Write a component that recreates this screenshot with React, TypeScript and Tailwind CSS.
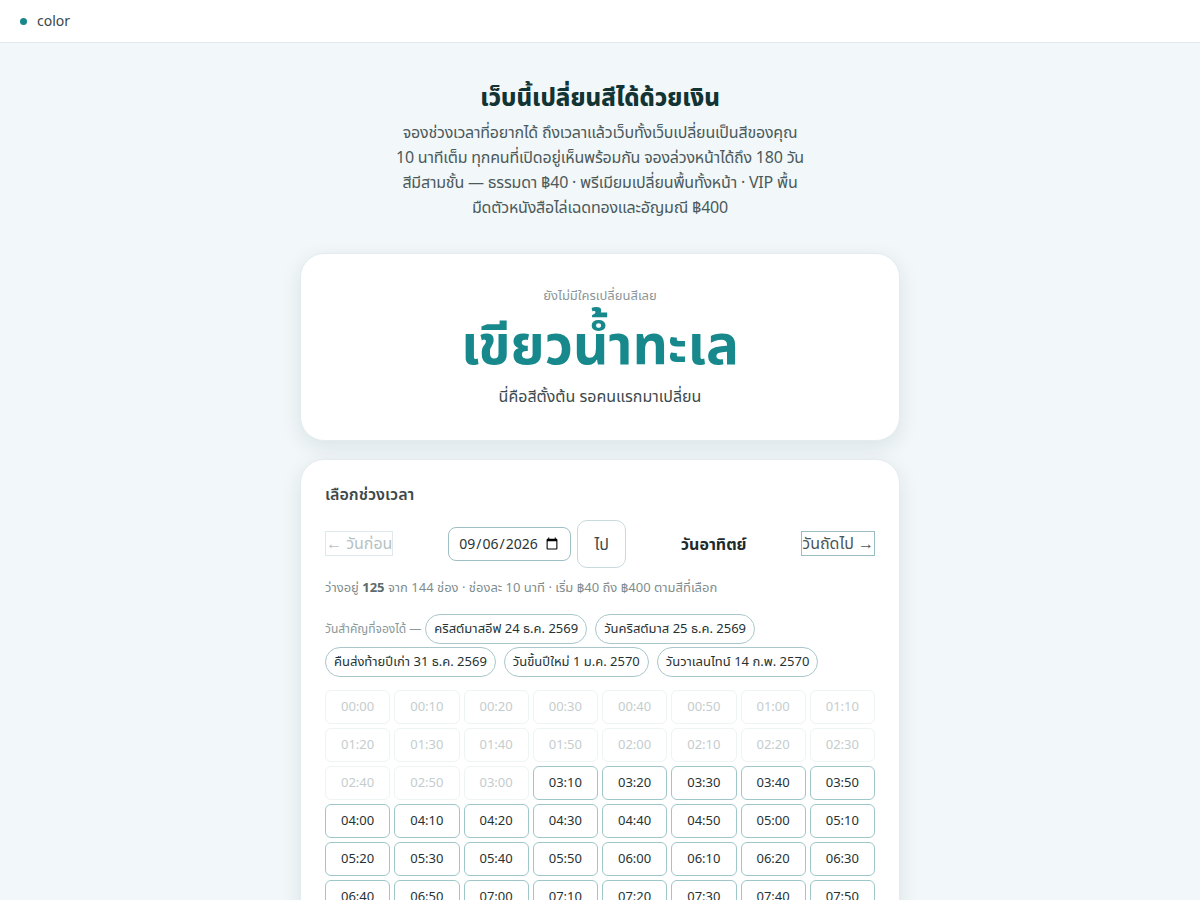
import { useState } from "react";

const holidays = [
  "คริสต์มาสอีฟ 24 ธ.ค. 2569",
  "วันคริสต์มาส 25 ธ.ค. 2569",
  "คืนส่งท้ายปีเก่า 31 ธ.ค. 2569",
  "วันขึ้นปีใหม่ 1 ม.ค. 2570",
  "วันวาเลนไทน์ 14 ก.พ. 2570",
];

const slots = Array.from({ length: 144 }, (_, i) => {
  const h = String(Math.floor(i / 6)).padStart(2, "0");
  const m = String((i % 6) * 10).padStart(2, "0");
  return { label: `${h}:${m}`, taken: i < 19 };
});

export default function App() {
  const [date, setDate] = useState("2026-09-06");

  return (
    <div className="min-h-screen bg-[#f2f7f9] font-['Noto_Sans','Noto_Sans_Thai',sans-serif] text-[#2f3d3e]">
      {/* Top bar */}
      <header className="h-[43px] bg-white border-b border-[#dfe9ec] flex items-center px-5 gap-[10px]">
        <span className="w-[7px] h-[7px] rounded-full bg-[#17878b]" />
        <span className="text-sm text-[#3a4748]">color</span>
      </header>

      <main className="flex flex-col items-center pt-[36px] pb-10">
        <h1 className="text-2xl font-extrabold text-[#123434] leading-[36px]">
          เว็บนี้เปลี่ยนสีได้ด้วยเงิน
        </h1>
        <p className="mt-[5px] text-center text-base tracking-[-0.2px] leading-[25px] text-[#4b5a5b]">
          จองช่วงเวลาที่อยากได้ ถึงเวลาแล้วเว็บทั้งเว็บเปลี่ยนเป็นสีของคุณ
          <br />
          10 นาทีเต็ม ทุกคนที่เปิดอยู่เห็นพร้อมกัน จองล่วงหน้าได้ถึง 180 วัน
          <br />
          สีมีสามชั้น — ธรรมดา ฿40 · พรีเมียมเปลี่ยนพื้นทั้งหน้า · VIP พื้น
          <br />
          มืดตัวหนังสือไล่เฉดทองและอัญมณี ฿400
        </p>

        {/* Current colour */}
        <section className="mt-[33px] w-[600px] bg-white rounded-[24px] border border-[#e3ecef] shadow-[0_6px_20px_rgba(20,60,70,0.10)] pt-[32px] pb-[32px] flex flex-col items-center">
          <div className="text-[13px] text-[#8a9799]">ยังไม่มีใครเปลี่ยนสีเลย</div>
          <div className="mt-[2px] text-[55px] font-bold leading-[70px] text-[#17898c]">เขียวน้ำทะเล</div>
          <div className="mt-[6px] text-base text-[#3c4a4b]">นี่คือสีตั้งต้น รอคนแรกมาเปลี่ยน</div>
        </section>

        {/* Slot picker */}
        <section className="mt-[18px] w-[600px] bg-white rounded-[24px] border border-[#e3ecef] shadow-[0_6px_20px_rgba(20,60,70,0.10)] px-6 pt-[22px] pb-6">
          <h2 className="text-base font-semibold text-[#3c4849]">เลือกช่วงเวลา</h2>

          <div className="mt-[14px] flex items-center justify-between">
            <button
              disabled
              className="border border-[#dfe8ea] px-0 text-base leading-[23px] text-[#b5c2c4]"
            >
              ← วันก่อน
            </button>
            <div className="flex items-center gap-[6px]">
              <input
                type="date"
                value={date}
                onChange={(e) => setDate(e.target.value)}
                className="h-[34px] w-[123px] rounded-lg border border-[#9ec0c4] px-[9px] text-sm text-[#2a3535]"
              />
              <button className="h-[48px] w-[49px] rounded-[10px] border border-[#c9dadd] text-base text-[#3b4849]">
                ไป
              </button>
            </div>
            <div className="text-base font-bold text-[#1f2a2b]">วันอาทิตย์</div>
            <button className="border border-[#9bbcc2] text-base leading-[23px] text-[#4a5859]">
              วันถัดไป →
            </button>
          </div>

          <div className="mt-[10px] text-[13px] text-[#7f8d8f]">
            ว่างอยู่ <b className="text-[#5d6b6c]">125</b> จาก 144 ช่อง · ช่องละ 10 นาที · เริ่ม ฿40 ถึง ฿400 ตามสีที่เลือก
          </div>

          <div className="mt-[17px] flex flex-wrap items-center gap-x-2 gap-y-[3px]">
            <span className="text-xs text-[#8a9799] mr-[-4px]">วันสำคัญที่จองได้ —</span>
            {holidays.map((h) => (
              <button
                key={h}
                className="h-[30px] rounded-full border border-[#a9c7cb] px-[8px] text-[13px] text-[#253233]"
              >
                {h}
              </button>
            ))}
          </div>

          <div className="mt-[13px] grid grid-cols-8 gap-x-[4px] gap-y-[4px]">
            {slots.map((s) => (
              <button
                key={s.label}
                disabled={s.taken}
                className={
                  s.taken
                    ? "h-[34px] rounded-md border border-[#eef3f4] text-[13px] text-[#c4cdce]"
                    : "h-[34px] rounded-md border border-[#9fc6c8] text-[13px] text-[#263233] hover:bg-[#eef7f7]"
                }
              >
                {s.label}
              </button>
            ))}
          </div>
        </section>
      </main>
    </div>
  );
}
